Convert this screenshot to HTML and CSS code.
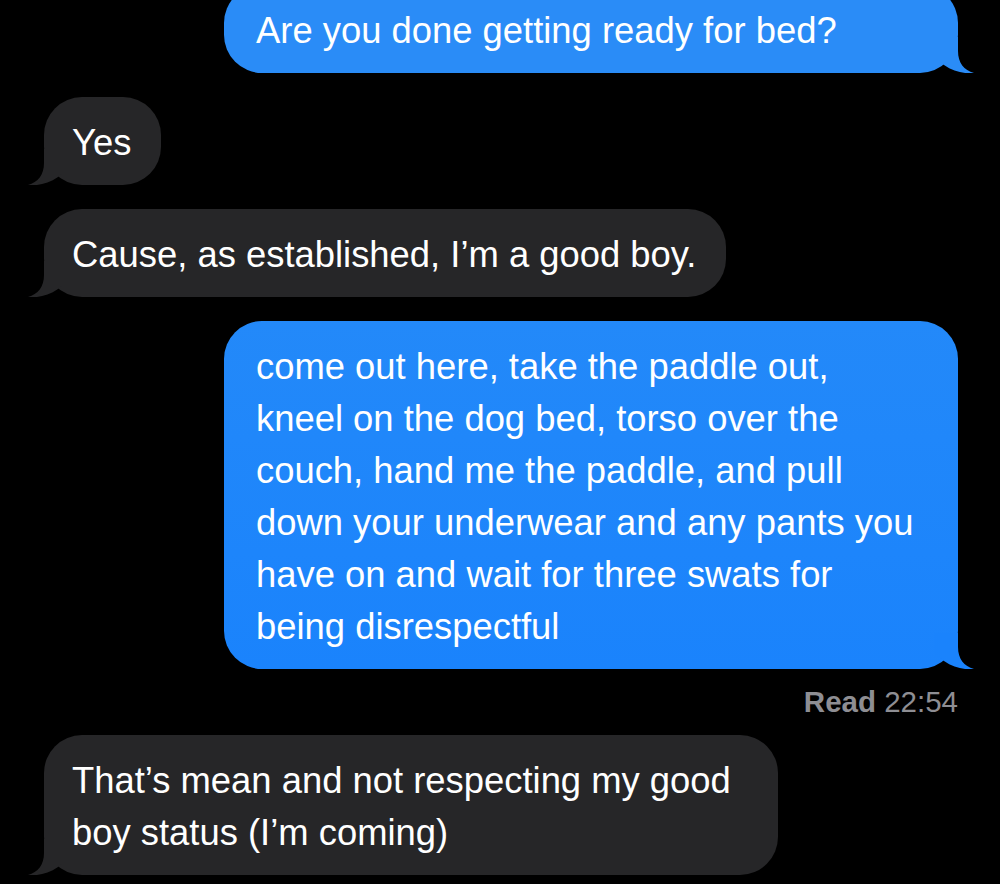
FILE: index.html
```html
<!DOCTYPE html>
<html lang="en">
<head>
  <meta charset="UTF-8">
  <title>Messages</title>
  <link rel="stylesheet" href="styles.css">
</head>
<body>
  <div class="thread">
    <div class="bubble sent wide top">
      <svg class="tail" viewBox="0 0 40 36" width="40" height="36"><path d="M24 0 L24 14 C24 26 30 33 40 36 C31 37 20 35 10 28 L0 20 L0 0 Z"/></svg>
      <span class="text">Are you done getting ready for bed?</span>
    </div>

    <div class="bubble received">
      <svg class="tail" viewBox="0 0 40 36" width="40" height="36"><path d="M24 0 L24 14 C24 26 30 33 40 36 C31 37 20 35 10 28 L0 20 L0 0 Z"/></svg>
      <span class="text">Yes</span>
    </div>

    <div class="bubble received">
      <svg class="tail" viewBox="0 0 40 36" width="40" height="36"><path d="M24 0 L24 14 C24 26 30 33 40 36 C31 37 20 35 10 28 L0 20 L0 0 Z"/></svg>
      <span class="text">Cause, as established, I’m a good boy.</span>
    </div>

    <div class="bubble sent wide bottom">
      <svg class="tail" viewBox="0 0 40 36" width="40" height="36"><path d="M24 0 L24 14 C24 26 30 33 40 36 C31 37 20 35 10 28 L0 20 L0 0 Z"/></svg>
      <span class="text">come out here, take the paddle out, kneel on the dog bed, torso over the couch, hand me the paddle, and pull down your underwear and any pants you have on and wait for three swats for being disrespectful</span>
    </div>

    <div class="receipt"><b>Read</b> 22:54</div>

    <div class="bubble received">
      <svg class="tail" viewBox="0 0 40 36" width="40" height="36"><path d="M24 0 L24 14 C24 26 30 33 40 36 C31 37 20 35 10 28 L0 20 L0 0 Z"/></svg>
      <span class="text">That’s mean and not respecting my good boy status (I’m coming)</span>
    </div>
  </div>
</body>
</html>
```

FILE: styles.css
```css
:root {
  --sent-top: #2a8cf7;
  --sent-bottom: #1a83fc;
  --received: #262628;
  --meta: #8e8e93;
  --body-font: "Liberation Sans", Arial, sans-serif;
}

* {
  margin: 0;
  padding: 0;
  box-sizing: border-box;
}

body {
  background: #000;
  font-family: var(--body-font);
  color: #fff;
  overflow: hidden;
}

.thread {
  display: flex;
  flex-direction: column;
  gap: 24px;
  margin-top: -15px;
  padding: 0 42px 0 44px;
}

.bubble {
  position: relative;
  max-width: 734px;
  padding: 20px 30px 16px 28px;
  border-radius: 38px;
  font-size: 36.4px;
  line-height: 52px;
}

.bubble .text {
  position: relative;
}

.tail {
  position: absolute;
  bottom: 0;
}

.sent {
  align-self: flex-end;
  padding: 20px 42px 16px 32px;
}

.sent .tail {
  right: -16px;
}

.wide {
  width: 734px;
}

.top {
  background: var(--sent-top);
}

.top .tail {
  fill: var(--sent-top);
}

.bottom {
  background: linear-gradient(#2389f9, var(--sent-bottom));
}

.bottom .tail {
  fill: var(--sent-bottom);
}

.received {
  align-self: flex-start;
  background: var(--received);
}

.received .tail {
  left: -16px;
  fill: var(--received);
  transform: scaleX(-1);
}

.receipt {
  align-self: flex-end;
  margin: -8px 0;
  font-size: 29.5px;
  line-height: 34px;
  color: var(--meta);
}

.receipt b {
  font-weight: 700;
}
```
